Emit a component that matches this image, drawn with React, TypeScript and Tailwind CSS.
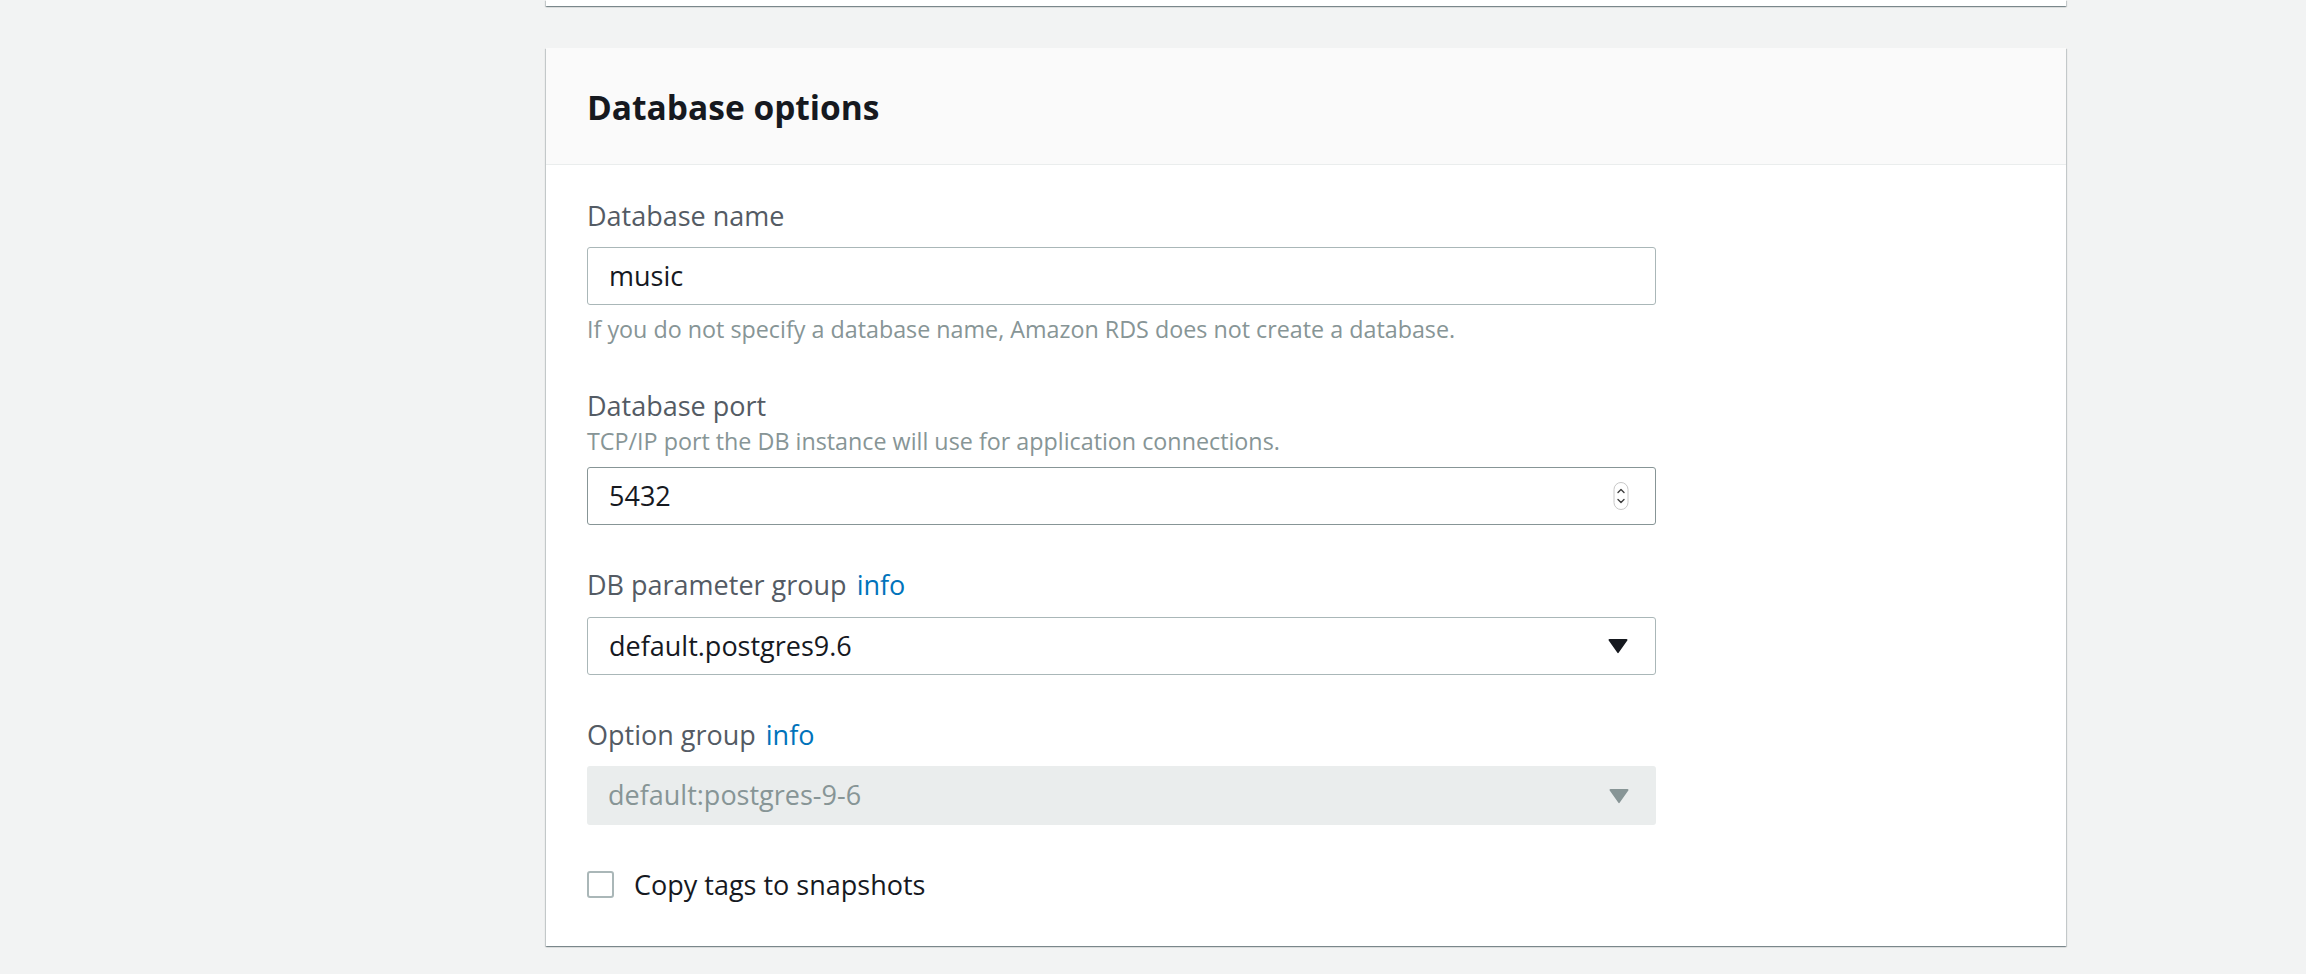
import React from 'react';

const cardShadow =
  'shadow-[0_1px_1px_0_rgba(0,28,36,0.3),1px_1px_1px_0_rgba(0,28,36,0.15),-1px_1px_1px_0_rgba(0,28,36,0.15)]';

function Label({ text, info }: { text: string; info?: boolean }) {
  return (
    <div className="text-[27px] leading-[37px] text-[#545b64]">
      {text}
      {info && <a className="ml-[10px] font-medium text-[#0073bb]">info</a>}
    </div>
  );
}

function Stepper() {
  return (
    <svg width="16" height="29" viewBox="0 0 16 29" aria-hidden="true">
      <rect x="1" y="0.5" width="14" height="27" rx="7" fill="#fff" stroke="#c8c8c8" />
      <path d="M5 10.5l3-3 3 3" fill="none" stroke="#3d3d3d" strokeWidth="1.4" strokeLinecap="round" strokeLinejoin="round" />
      <path d="M5 17.5l3 3 3-3" fill="none" stroke="#3d3d3d" strokeWidth="1.4" strokeLinecap="round" strokeLinejoin="round" />
    </svg>
  );
}

function Caret({ color }: { color: string }) {
  return (
    <svg width="20" height="16" viewBox="0 0 20 16" aria-hidden="true">
      <path d="M1.5 1h17a1 1 0 0 1 .8 1.6l-8.5 12a1 1 0 0 1-1.6 0L.7 2.6A1 1 0 0 1 1.5 1z" fill={color} />
    </svg>
  );
}

export default function App() {
  return (
    <div className="min-h-screen bg-[#f2f3f3] pl-[546px] font-['Open_Sans',sans-serif]">
      <div className="w-[1520px]">
        {/* previous panel, scrolled mostly out of view */}
        <div className={`h-[6px] bg-white ${cardShadow}`} />

        <section className={`mt-[42px] bg-white ${cardShadow}`}>
          <div className="flex h-[117px] items-center border-b border-[#eaeded] bg-[#fafafa] px-[41px] pt-[2px]">
            <h2 className="text-[33.5px] font-bold text-[#16191f]">Database options</h2>
          </div>

          <div className="px-[41px] pt-[32px] pb-[43px]">
            {/* Database name */}
            <Label text="Database name" />
            <div className="mt-[13px] flex h-[58px] w-[1069px] items-center rounded-[3px] border border-[#aab7b8] px-[21px] text-[27px] text-[#16191f]">
              music
            </div>
            <p className="mt-[9px] text-[23.3px] leading-[31px] text-[#879596]">
              If you do not specify a database name, Amazon RDS does not create a database.
            </p>

            {/* Database port */}
            <div className="mt-[42px]">
              <Label text="Database port" />
              <p className="mt-[2px] text-[23.3px] leading-[31px] text-[#879596]">
                TCP/IP port the DB instance will use for application connections.
              </p>
              <div className="mt-[10px] flex h-[58px] w-[1069px] items-center justify-between rounded-[3px] border border-[#879596] pl-[21px] pr-[26px] text-[27px] text-[#16191f]">
                <span>5432</span>
                <Stepper />
              </div>
            </div>

            {/* DB parameter group */}
            <div className="mt-[41px]">
              <Label text="DB parameter group" info />
              <div className="mt-[14px] flex h-[58px] w-[1069px] items-center justify-between rounded-[3px] border border-[#aab7b8] pl-[21px] pr-[27px] text-[27px] text-[#16191f]">
                <span>default.postgres9.6</span>
                <Caret color="#16191f" />
              </div>
            </div>

            {/* Option group */}
            <div className="mt-[41px]">
              <Label text="Option group" info />
              <div className="mt-[13px] flex h-[59px] w-[1069px] items-center justify-between rounded-[3px] bg-[#eaeded] pl-[21px] pr-[27px] text-[27px] text-[#879596]">
                <span>default:postgres-9-6</span>
                <Caret color="#879596" />
              </div>
            </div>

            {/* Copy tags */}
            <label className="mt-[41px] flex items-center gap-[20px]">
              <span className="h-[27px] w-[27px] rounded-[3px] border-2 border-[#aab7b8] bg-white" />
              <span className="text-[27px] leading-[37px] text-[#16191f]">Copy tags to snapshots</span>
            </label>
          </div>
        </section>
      </div>
    </div>
  );
}
